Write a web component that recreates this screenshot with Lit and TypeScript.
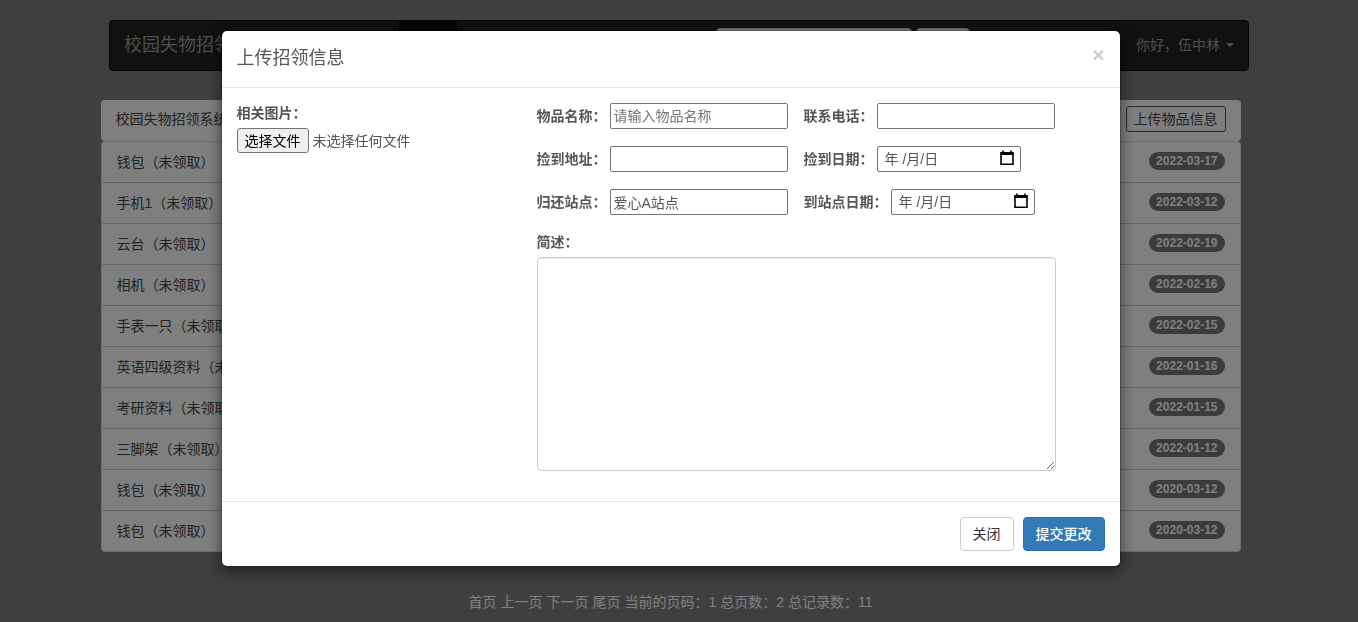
import { LitElement, html, css } from "lit";
import { customElement, state } from "lit/decorators.js";

interface Item {
  name: string;
  date: string;
}

@customElement("app-root")
export class AppRoot extends LitElement {
  @state() private items: Item[] = [
    { name: "钱包", date: "2022-03-17" },
    { name: "手机1", date: "2022-03-12" },
    { name: "云台", date: "2022-02-19" },
    { name: "相机", date: "2022-02-16" },
    { name: "手表一只", date: "2022-02-15" },
    { name: "英语四级资料", date: "2022-01-16" },
    { name: "考研资料", date: "2022-01-15" },
    { name: "三脚架", date: "2022-01-12" },
    { name: "钱包", date: "2020-03-12" },
    { name: "钱包", date: "2020-03-12" },
  ];

  static styles = css`
    :host {
      display: block;
      min-height: 100vh;
      background: #7f7f7f;
      color: #555;
      font: 14px/20px "Liberation Sans", "Noto Sans CJK SC", sans-serif;
    }
    * {
      box-sizing: border-box;
    }
    input,
    button,
    textarea {
      font: inherit;
      color: inherit;
      margin: 0;
    }
    a {
      color: inherit;
      text-decoration: none;
    }
    .page {
      padding-top: 20px;
    }
    .navbar {
      display: flex;
      align-items: center;
      max-width: 1140px;
      height: 51px;
      margin: 0 auto;
      padding: 0 14px 2px;
      background: #222;
      border: 1px solid #080808;
      border-radius: 4px;
      color: #9d9d9d;
    }
    .brand {
      flex: 0 0 275px;
      font-size: 18px;
    }
    .nav-link {
      padding: 15px;
      background: #080808;
      color: #fff;
    }
    .search {
      display: flex;
      gap: 4px;
      margin-left: auto;
    }
    .search input {
      width: 196px;
      height: 34px;
      border: 1px solid #ccc;
      border-radius: 4px;
      background: #fff;
    }
    .search button {
      width: 54px;
      height: 34px;
      padding: 0;
      border: 1px solid #ccc;
      border-radius: 4px;
      background: #fff;
      color: #333;
    }
    .user {
      display: flex;
      align-items: center;
      gap: 6px;
      margin-left: 166px;
    }
    .caret {
      border-top: 4px solid;
      border-left: 4px solid transparent;
      border-right: 4px solid transparent;
    }
    .content {
      padding-right: 17px;
      margin-top: 29px;
    }
    .panel {
      max-width: 1140px;
      margin: 0 auto;
      color: #444;
    }
    .panel-head {
      display: flex;
      align-items: center;
      justify-content: space-between;
      height: 41px;
      padding: 0 15px 4px;
      background: #fff;
      border-radius: 4px;
    }
    .upload {
      height: 26px;
      padding: 0 7px;
      border: 1px solid #555;
      border-radius: 3px;
      background: transparent;
    }
    .list {
      list-style: none;
      margin: 0;
      padding: 0;
      background: #fff;
      border: 1px solid #ddd;
      border-radius: 4px;
      overflow: hidden;
    }
    .list li {
      display: flex;
      align-items: flex-start;
      justify-content: space-between;
      height: 41px;
      padding: 10px 15px;
      border-bottom: 1px solid #ccc;
    }
    .list li:last-child {
      border-bottom: 0;
      height: 40px;
    }
    .badge {
      padding: 3px 7px;
      border-radius: 10px;
      background: #777;
      color: #fff;
      font-size: 12px;
      line-height: 12px;
      font-weight: 700;
    }
    .pager {
      display: flex;
      justify-content: center;
      gap: 4px;
      margin-top: 40px;
      color: #fff;
    }
    .backdrop {
      position: fixed;
      inset: 0;
      background: rgba(0, 0, 0, 0.5);
    }
    .modal {
      position: fixed;
      inset: 0;
      padding: 30px 17px 30px 0;
      overflow: auto;
    }
    .dialog {
      max-width: 900px;
      margin: 0 auto;
      background: #fff;
      background-clip: padding-box;
      border: 1px solid rgba(0, 0, 0, 0.2);
      border-radius: 6px;
      box-shadow: 0 5px 15px rgba(0, 0, 0, 0.5);
    }
    .dialog-head {
      display: flex;
      justify-content: space-between;
      padding: 15px;
      border-bottom: 1px solid #e5e5e5;
    }
    .dialog-head h4 {
      margin: 0;
      padding-bottom: 2px;
      font-size: 18px;
      line-height: 24px;
      font-weight: 400;
    }
    .close {
      height: 18px;
      padding: 0;
      border: 0;
      background: none;
      color: #ccc;
      font-size: 21px;
      line-height: 18px;
      font-weight: 700;
    }
    .dialog-body {
      display: grid;
      grid-template-columns: 300px minmax(0, 519px);
      padding: 15px 15px 30px;
    }
    .strong {
      font-weight: 700;
    }
    .picture {
      display: flex;
      flex-direction: column;
      align-items: flex-start;
      gap: 5px;
    }
    .file {
      display: flex;
      align-items: center;
      gap: 4px;
    }
    .file input {
      position: absolute;
      width: 1px;
      height: 1px;
      opacity: 0;
    }
    .file-button {
      height: 25px;
      padding: 2px 7px;
      line-height: 20px;
      border: 1px solid #767676;
      border-radius: 3px;
      background: #efefef;
      color: #000;
    }
    .fields {
      display: flex;
      flex-direction: column;
      gap: 17px;
    }
    .row {
      display: grid;
      grid-template-columns: 251px 1fr;
      column-gap: 16px;
    }
    .field {
      display: flex;
      align-items: center;
      gap: 4px;
    }
    .field label {
      flex: none;
      font-weight: 700;
    }
    .row .field {
      gap: 3px;
    }
    .box {
      width: 178px;
      height: 26px;
      padding: 0 3px 1px;
      border: 1px solid #767676;
      border-radius: 2px;
      background: #fff;
    }
    .box::placeholder {
      color: #757575;
      opacity: 1;
    }
    .date {
      display: flex;
      align-items: center;
      width: 144px;
      height: 26px;
      padding: 0 6px;
      border: 1px solid #767676;
      border-radius: 2px;
    }
    .date input {
      flex: 1;
      min-width: 0;
      padding: 0 0 0 1px;
      border: 0;
      background: none;
    }
    .date input::placeholder {
      color: #555;
      opacity: 1;
    }
    .date button {
      display: flex;
      padding: 0 0 2px;
      border: 0;
      background: none;
      color: #000;
    }
    .describe {
      display: flex;
      flex-direction: column;
      gap: 5px;
    }
    textarea {
      display: block;
      width: 100%;
      height: 214px;
      padding: 6px 12px;
      border: 1px solid #ccc;
      border-radius: 4px;
      box-shadow: inset 0 1px 1px rgba(0, 0, 0, 0.075);
    }
    .dialog-foot {
      display: flex;
      justify-content: flex-end;
      gap: 9px;
      padding: 15px;
      border-top: 1px solid #e5e5e5;
    }
    .btn {
      height: 34px;
      padding: 0 12px;
      border: 1px solid #ccc;
      border-radius: 4px;
      background: #fff;
      color: #333;
    }
    .primary {
      border-color: #2e6da4;
      background: #337ab7;
      color: #fff;
      font-weight: 500;
    }
  `;

  private dateField(id: string, label: string) {
    return html`<div class="field">
      <label for=${id}>${label}</label>
      <span class="date">
        <input id=${id} type="text" placeholder="年 /月/日" />
        <button type="button" aria-label="选择日期">
          <svg width="14" height="16" viewBox="0 0 14 16" fill="none" stroke="currentColor">
            <path d="M1 3.5V14.25H13V3.5" stroke-width="1.6" />
            <path d="M0.2 2H13.8V5H0.2Z" fill="currentColor" stroke="none" />
            <path d="M3 0.5V3M11 0.5V3" stroke-width="1.6" />
          </svg>
        </button>
      </span>
    </div>`;
  }

  private textField(id: string, label: string, placeholder = "", value = "") {
    return html`<div class="field">
      <label for=${id}>${label}</label>
      <input class="box" id=${id} type="text" placeholder=${placeholder} .value=${value} />
    </div>`;
  }

  render() {
    return html`
      <div class="page">
        <nav class="navbar">
          <a class="brand" href="#">校园失物招领</a>
          <a class="nav-link" href="#">首页</a>
          <form class="search">
            <input type="text" aria-label="搜索" />
            <button type="button">搜索</button>
          </form>
          <a class="user" href="#">你好，伍中林<span class="caret"></span></a>
        </nav>
        <main class="content">
          <section class="panel">
            <div class="panel-head">
              <span>校园失物招领系统</span>
              <button class="upload" type="button">上传物品信息</button>
            </div>
            <ul class="list">
              ${this.items.map(
                (item) => html`<li>
                  <a href="#">${item.name}（未领取）</a>
                  <span class="badge">${item.date}</span>
                </li>`
              )}
            </ul>
          </section>
          <div class="pager">
            <a href="#">首页</a><a href="#">上一页</a><a href="#">下一页</a><a href="#">尾页</a>
            <span>当前的页码：1</span><span>总页数：2</span><span>总记录数：11</span>
          </div>
        </main>
      </div>
      <div class="backdrop"></div>
      <div class="modal" role="dialog" aria-modal="true" aria-labelledby="title">
        <div class="dialog">
          <header class="dialog-head">
            <h4 id="title">上传招领信息</h4>
            <button class="close" type="button" aria-label="关闭">×</button>
          </header>
          <div class="dialog-body">
            <div class="picture">
              <label class="strong" for="picture">相关图片：</label>
              <label class="file">
                <input id="picture" type="file" />
                <span class="file-button">选择文件</span>
                <span>未选择任何文件</span>
              </label>
            </div>
            <div class="fields">
              <div class="row">
                ${this.textField("name", "物品名称：", "请输入物品名称")}
                ${this.textField("phone", "联系电话：")}
              </div>
              <div class="row">
                ${this.textField("place", "捡到地址：")}
                ${this.dateField("found", "捡到日期：")}
              </div>
              <div class="row">
                ${this.textField("station", "归还站点：", "", "爱心A站点")}
                ${this.dateField("arrived", "到站点日期：")}
              </div>
              <div class="describe">
                <label class="strong" for="detail">简述：</label>
                <textarea id="detail"></textarea>
              </div>
            </div>
          </div>
          <footer class="dialog-foot">
            <button class="btn" type="button">关闭</button>
            <button class="btn primary" type="button">提交更改</button>
          </footer>
        </div>
      </div>
    `;
  }
}
